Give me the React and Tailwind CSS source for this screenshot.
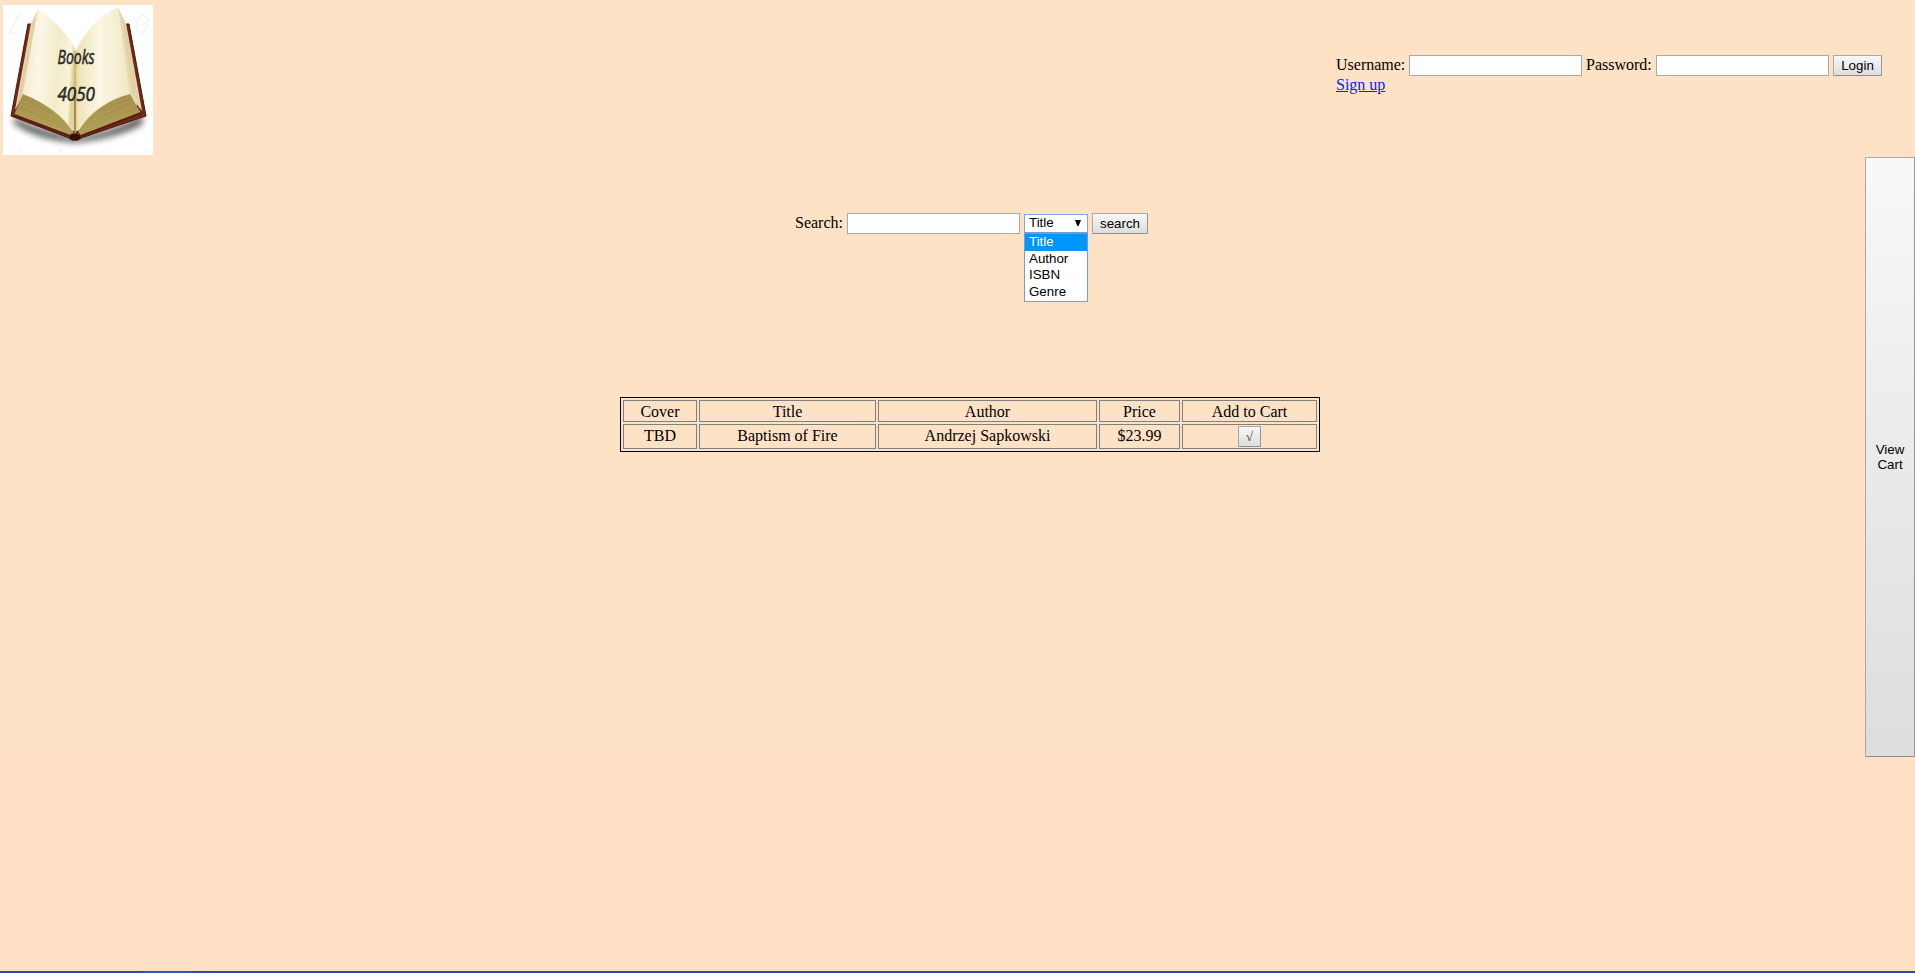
import React from "react";

const buttonClass =
  "block shrink-0 border border-t-[#a9a9a9] border-l-[#a9a9a9] border-r-[#969696] border-b-[#8f8f8f] rounded-[1px] bg-linear-to-b from-[#f8f8f8] to-[#dddddd] text-center text-black font-['Liberation_Sans',Arial,sans-serif] text-[13.333px]";
const inputClass =
  "block shrink-0 w-[173px] h-[21px] border border-[#a9a9a9] bg-white px-px text-[13.333px] outline-none";
const cellClass = "flex items-center justify-center border border-[#808080]";

function BookLogo() {
  return (
    <svg className="block w-[150px] h-[150px] shrink-0" viewBox="3 5 150 150" role="img" aria-label="Books 4050">
      <defs>
        <linearGradient id="left" x1="0" y1="0" x2="1" y2="0.15">
          <stop offset="0" stopColor="#f1e8c9" />
          <stop offset="0.35" stopColor="#fbf7e6" />
          <stop offset="0.7" stopColor="#f3ecc9" />
          <stop offset="0.94" stopColor="#f8f3da" />
          <stop offset="1" stopColor="#e3d29c" />
        </linearGradient>
        <linearGradient id="right" x1="0" y1="0" x2="1" y2="0">
          <stop offset="0" stopColor="#e0cd92" />
          <stop offset="0.08" stopColor="#f0e6bd" />
          <stop offset="0.45" stopColor="#fbf7e4" />
          <stop offset="1" stopColor="#f0e8c3" />
        </linearGradient>
        <linearGradient id="edge" x1="0" y1="0" x2="0" y2="1">
          <stop offset="0" stopColor="#a5914d" />
          <stop offset="1" stopColor="#b5a25c" />
        </linearGradient>
        <filter id="shadow" x="-20%" y="-50%" width="140%" height="200%">
          <feGaussianBlur stdDeviation="3.6" />
        </filter>
      </defs>
      <rect x="3" y="5" width="150" height="150" fill="#fff" />
      <g fill="none" stroke="#f3f3f3" strokeWidth="1.3">
        <path d="M8 35L20 13M11 32l5 2M92 35l13-22M138 18l5-3 5 4-1 9-5 6-5-5zM139 25l7-2M10 100l5-15 3 8M17 155l4-6M57 155l5-6M100 155l5-6M142 154l6-4" />
      </g>
      <path d="M14 117Q38 131 75 137Q112 133 143 115L142 124Q116 138 75 142Q36 139 14 123Z" fill="#000" opacity=".75" filter="url(#shadow)" />
      <path d="M28 24L31.500 24L19 110L75 132L138 110L126 24L129 24L146 116L81 138Q75 143 69 138L11 116Z" fill="#702a16" stroke="#4d180d" strokeWidth="1" strokeLinejoin="round" />
      <path d="M38 9L31 23L15 110L24 94Z" fill="#e8d8b0" />
      <path d="M118 7L126 23L142 111L129 94Z" fill="#e8d8b0" />
      <g fill="none" stroke="#cdb784" strokeWidth=".6" opacity=".65">
        <path d="M35 20L20 99M33 23L18 104M123 19L134 97M125 24L138 104" />
      </g>
      <path d="M38 9Q65 27 76 51L76 133Q52 105 23 94Z" fill="url(#left)" />
      <path d="M118 7Q88 22 76 51L75 133Q100 102 130 94Z" fill="url(#right)" />
      <path d="M23 94Q58 108 74 133L70 136L14 115Z" fill="url(#edge)" />
      <path d="M130 94Q96 103 78 131L81 136L141 113Z" fill="url(#edge)" />
      <g fill="none" stroke="#7b6930" strokeWidth=".45" opacity=".4">
        <path d="M21 98Q56 112 73 134M19 102Q52 114 72 135M17 107Q50 117 71 136M132 98Q97 108 79 132M135 103Q100 113 80 134M138 108Q106 117 81 135" />
      </g>
      <path d="M14 115L70 136M141 113L81 136" fill="none" stroke="#5a1e10" strokeWidth="2.200" />
      <path d="M75 51V132" stroke="#d3ba7a" strokeWidth="2.200" />
      <path d="M75 90V132" stroke="#8c7440" strokeWidth="1.300" />
      <path d="M78 50V130" stroke="#ecdcab" strokeWidth="1.500" />
      <ellipse cx="75" cy="137" rx="6.500" ry="3.600" fill="#351007" stroke="#75402b" strokeWidth=".8" />
      <g fill="#292929" stroke="#292929" strokeWidth=".55" fontFamily="'Open Sans', sans-serif" fontStyle="italic" fontWeight="400" fontSize="19.5">
        <text x="57.500" y="64" textLength="37" lengthAdjust="spacingAndGlyphs">Books</text>
        <text x="57.500" y="101" textLength="37.500" lengthAdjust="spacingAndGlyphs">4050</text>
      </g>
    </svg>
  );
}

function LoginForm() {
  return (
    <form className="mt-[50px] mr-[33px] w-[546px]" onSubmit={(e) => e.preventDefault()}>
      <div className="flex h-[21px] items-center">
        <label htmlFor="username" className="w-[73px] shrink-0 pb-[2px] whitespace-nowrap">Username:</label>
        <input id="username" className={inputClass} />
        <label htmlFor="password" className="ml-1 w-[70px] shrink-0 pb-[2px] whitespace-nowrap">Password:</label>
        <input id="password" type="password" className={inputClass} />
        <button className={`${buttonClass} ml-1 h-[21px] w-[49px] leading-[19px]`}>Login</button>
      </div>
      <a href="#signup" className="block w-fit leading-[18px] text-[#0026ee] underline">Sign up</a>
    </form>
  );
}

function SearchForm() {
  return (
    <form className="ml-[795px] flex h-[21px] items-center" onSubmit={(e) => e.preventDefault()}>
      <label htmlFor="query" className="w-[52px] shrink-0 pb-[2px] whitespace-nowrap">Search:</label>
      <input id="query" className={inputClass} />
      <div className="relative ml-[4px] h-[19px] w-[64px] shrink-0 border border-[#7ba6df] bg-white font-['Liberation_Sans',Arial,sans-serif] text-[13.333px] text-black">
        <div className="flex h-[17px] items-center justify-between pr-[6px] pb-px pl-1">
          <span>Title</span>
          <svg className="h-[6px] w-[6px]" viewBox="0 0 6 6"><path d="M0 0H6L3.600 6H2.400Z" fill="#000" /></svg>
        </div>
        <ul className="absolute top-[17px] -left-px z-10 h-[70px] w-[64px] border border-t-2 border-[#6f9fd8] bg-white">
          <li className="h-[17px] bg-[#0096ff] pl-1 leading-[16px] text-white">Title</li>
          <li className="h-[16px] pl-1 leading-[15px]">Author</li>
          <li className="h-[16px] pl-1 leading-[16px]">ISBN</li>
          <li className="h-[17px] pl-1 leading-[17px]">Genre</li>
        </ul>
      </div>
      <button className={`${buttonClass} ml-1 h-[21px] w-[56px] leading-[19px]`}>search</button>
    </form>
  );
}

function ResultsTable() {
  return (
    <div className="mt-[163px] ml-[620px] grid h-[55px] w-[700px] grid-cols-[74px_177px_219px_81px_135px] grid-rows-[22px_25px] gap-[2px] border border-black p-[2px] leading-[18px]">
      {["Cover", "Title", "Author", "Price", "Add to Cart"].map((text) => (
        <div key={text} className={`${cellClass} pt-[2px]`}>{text}</div>
      ))}
      {["TBD", "Baptism of Fire", "Andrzej Sapkowski", "$23.99"].map((text) => (
        <div key={text} className={`${cellClass} pb-px`}>{text}</div>
      ))}
      <div className={cellClass}>
        <button className={`${buttonClass} h-[21px] w-[23px] leading-[19px]`}>
          <span className="font-['Liberation_Serif',serif] text-[#333]">√</span>
        </button>
      </div>
    </div>
  );
}

export default function App() {
  return (
    <div className="flex h-[973px] w-[1915px] flex-col overflow-hidden bg-[#fee2c6] font-['Liberation_Serif','Times_New_Roman',serif] text-[16px] leading-[18px] text-black">
      <header className="flex h-[157px] shrink-0 items-start justify-between pt-[5px] pl-[3px]">
        <BookLogo />
        <LoginForm />
      </header>
      <div className="flex h-[600px] shrink-0">
        <main className="w-[1865px] pt-[56px]">
          <SearchForm />
          <ResultsTable />
        </main>
        <button className={`${buttonClass} h-[600px] w-[50px] px-1.5 leading-[15px]`}>View Cart</button>
      </div>
      <div className="flex-1 bg-[#fee1c5]" />
      <div className="flex h-[2px] shrink-0 bg-[#2b519c]">
        <div className="ml-[143px] w-[48px] bg-[#315ab5]" />
      </div>
    </div>
  );
}
